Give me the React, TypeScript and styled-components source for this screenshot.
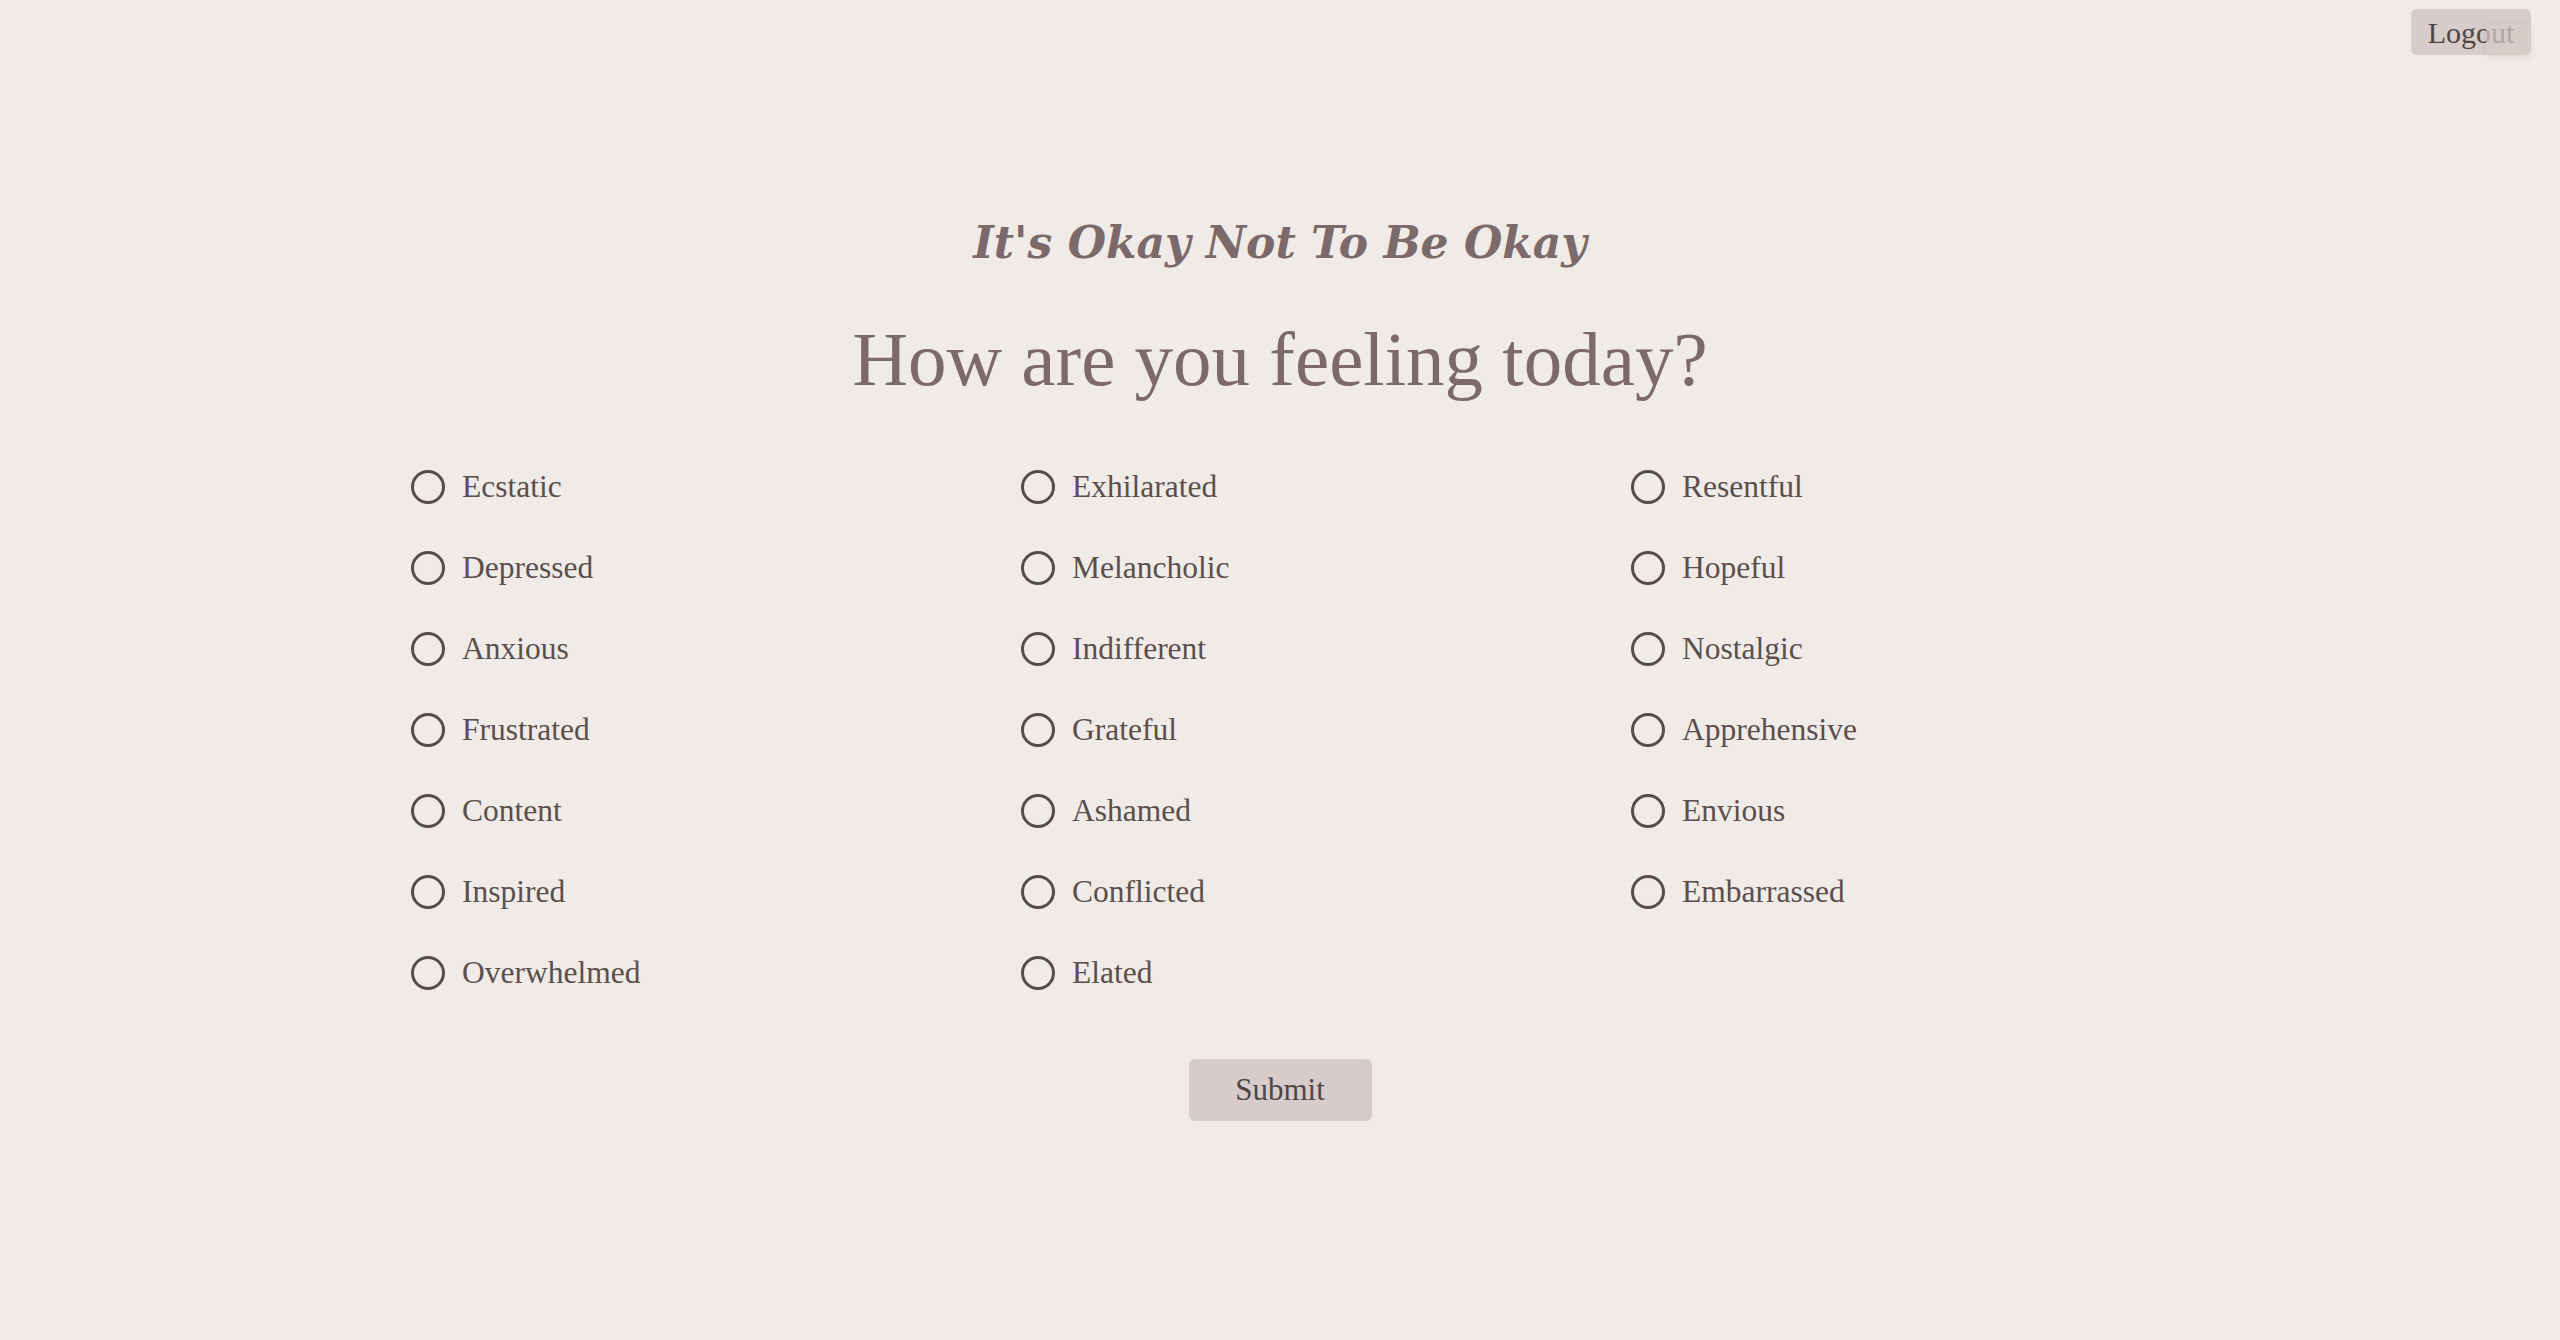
import React, { useState } from "react";
import styled, { createGlobalStyle } from "styled-components";

const GlobalStyle = createGlobalStyle`
  html, body {
    margin: 0;
    padding: 0;
    background: #f0ebe6;
  }
  body {
    font-family: "Liberation Serif", "Times New Roman", serif;
    min-height: 1340px;
  }
`;

const Page = styled.div`
  position: relative;
  min-height: 1340px;
  background: #f0ebe6;
  display: flex;
  flex-direction: column;
  align-items: center;
  padding-top: 221px;
  box-sizing: border-box;
`;

const LogoutButton = styled.button`
  position: absolute;
  top: 9px;
  right: 29px;
  width: 120px;
  height: 46px;
  padding: 0;
  border: none;
  border-radius: 6px;
  background: #d7ccc9;
  color: #4f4644;
  font-family: "Liberation Serif", "Times New Roman", serif;
  font-size: 30px;
  line-height: 48px;
  text-align: center;
  cursor: pointer;
`;

const LogoutVeil = styled.span`
  position: absolute;
  right: 0;
  bottom: 0;
  width: 45px;
  height: 31px;
  border-radius: 6px;
  background: rgba(214, 204, 200, 0.72);
  box-shadow: 0 2px 6px rgba(90, 70, 66, 0.12);
  pointer-events: none;
`;

const Title = styled.h1`
  margin: 0;
  font-family: "DejaVu Serif", "Liberation Serif", serif;
  font-style: italic;
  font-weight: 700;
  font-size: 44px;
  line-height: 44px;
  color: #7b6a69;
  text-align: center;
`;

const Question = styled.h2`
  margin: 56px 0 0;
  font-family: "Liberation Serif", "Times New Roman", serif;
  font-weight: 400;
  font-size: 77px;
  line-height: 77px;
  color: #7b6a69;
  text-align: center;
`;

const Form = styled.form`
  display: flex;
  flex-direction: column;
  align-items: center;
  margin-top: 72px;
`;

const Options = styled.div`
  display: grid;
  grid-template-columns: repeat(3, 610px);
  grid-auto-flow: column;
  grid-template-rows: repeat(7, 34px);
  row-gap: 47px;
`;

const Option = styled.label`
  display: flex;
  align-items: center;
  gap: 17px;
  padding-left: 46px;
  height: 34px;
  font-size: 31.5px;
  line-height: 34px;
  color: #5a4f4d;
  cursor: pointer;
`;

const Radio = styled.input`
  appearance: none;
  -webkit-appearance: none;
  margin: 0;
  width: 34px;
  height: 34px;
  flex: none;
  border: 3px solid #574c4a;
  border-radius: 50%;
  background: transparent;
  box-sizing: border-box;
  cursor: pointer;
  &:checked {
    background: radial-gradient(circle, #574c4a 0 7px, transparent 8px);
  }
`;

const SubmitButton = styled.button`
  margin-top: 69px;
  width: 183px;
  height: 62px;
  padding: 0;
  border: none;
  border-radius: 6px;
  background: #d7ccc9;
  color: #4f4644;
  font-family: "Liberation Serif", "Times New Roman", serif;
  font-size: 31px;
  line-height: 62px;
  cursor: pointer;
`;

const feelings = [
  "Ecstatic",
  "Depressed",
  "Anxious",
  "Frustrated",
  "Content",
  "Inspired",
  "Overwhelmed",
  "Exhilarated",
  "Melancholic",
  "Indifferent",
  "Grateful",
  "Ashamed",
  "Conflicted",
  "Elated",
  "Resentful",
  "Hopeful",
  "Nostalgic",
  "Apprehensive",
  "Envious",
  "Embarrassed",
];

export default function App() {
  const [feeling, setFeeling] = useState<string>("");

  return (
    <>
      <GlobalStyle />
      <Page>
        <LogoutButton type="button">
          Logout
          <LogoutVeil />
        </LogoutButton>
        <Title>It's Okay Not To Be Okay</Title>
        <Question>How are you feeling today?</Question>
        <Form onSubmit={(e) => e.preventDefault()}>
          <Options>
            {feelings.map((f) => (
              <Option key={f}>
                <Radio
                  type="radio"
                  name="feeling"
                  value={f}
                  checked={feeling === f}
                  onChange={() => setFeeling(f)}
                />
                {f}
              </Option>
            ))}
          </Options>
          <SubmitButton type="submit">Submit</SubmitButton>
        </Form>
      </Page>
    </>
  );
}
